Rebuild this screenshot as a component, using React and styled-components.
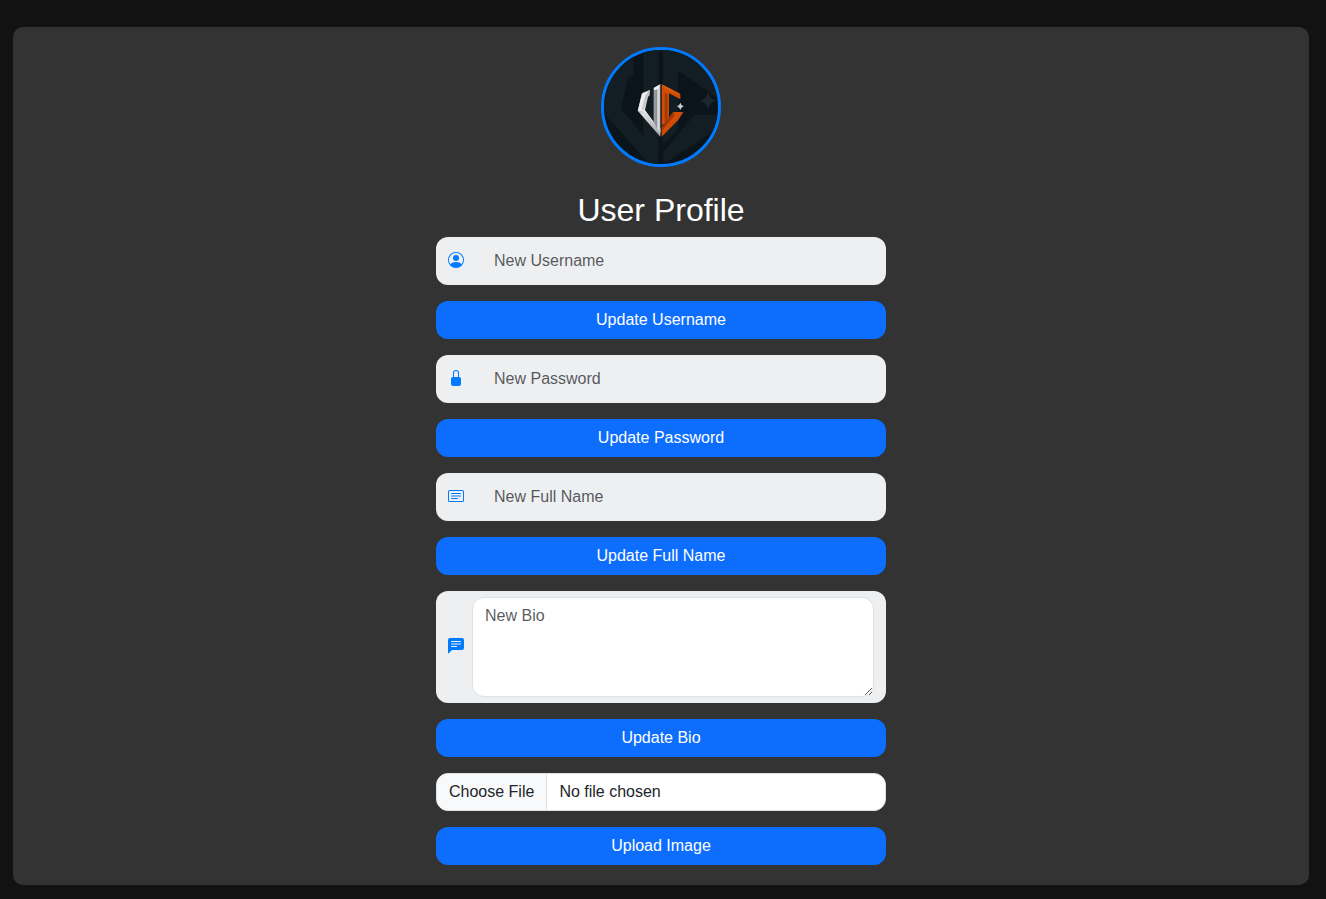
import React from 'react';
import styled, { createGlobalStyle } from 'styled-components';
import { BsPersonCircle, BsLockFill, BsCardText, BsChatLeftTextFill } from 'react-icons/bs';

const GlobalStyle = createGlobalStyle`
  *, *::before, *::after { box-sizing: border-box; }
  body {
    margin: 0;
    background: #121212;
    color: #fff;
    font: 400 16px/1.5 "Liberation Sans", Arial, sans-serif;
  }
`;

const Page = styled.main`
  min-height: 899px;
  padding: 27px 17px 14px 13px;
`;

const Card = styled.section`
  height: 858px;
  padding: 20px;
  border-radius: 10px;
  background: #333;
  display: flex;
  flex-direction: column;
  align-items: center;
`;

const Avatar = styled.div`
  width: 120px;
  height: 120px;
  flex: none;
  border: 3px solid #007bff;
  border-radius: 50%;
  overflow: hidden;
  background: #0b141a;

  svg { display: block; width: 100%; height: 100%; }
`;

const Title = styled.h2`
  margin: 24px 0 8px;
  font-size: 32px;
  line-height: 38px;
  font-weight: 400;
`;

const Form = styled.form`
  width: 450px;
  display: flex;
  flex-direction: column;
  gap: 16px;
`;

const Field = styled.label`
  display: flex;
  align-items: center;
  height: ${({ $tall }) => ($tall ? '112px' : '48px')};
  padding: 0 12px;
  border-radius: 12px;
  background: #eeeff1;

  svg {
    flex: none;
    width: 16px;
    height: 16px;
    color: #007bff;
    margin-bottom: 2px;
  }
`;

const Input = styled.input`
  flex: 1;
  min-width: 0;
  height: 38px;
  margin: 0 0 1px 17px;
  padding: 6px 12px;
  border: 1px solid transparent;
  background: transparent;
  color: #212529;
  font: inherit;
  outline: none;

  &::placeholder { color: rgba(33, 37, 41, 0.75); }
`;

const TextArea = styled.textarea`
  flex: 1;
  height: 100px;
  margin: 0 0 0 8px;
  padding: 6px 12px;
  border: 1px solid #dee2e6;
  border-radius: 12px;
  background: #fff;
  color: #212529;
  font: inherit;
  resize: vertical;
  outline: none;

  &::placeholder { color: rgba(33, 37, 41, 0.75); }
`;

const Button = styled.button`
  height: 38px;
  padding: 0 12px 1px;
  border: 0;
  border-radius: 12px;
  background: #0d6efd;
  color: #fff;
  font: inherit;
  cursor: pointer;
`;

const FileInput = styled.input`
  width: 100%;
  height: 38px;
  padding: 6px 12px;
  border: 1px solid #dee2e6;
  border-radius: 12px;
  overflow: hidden;
  background: #fff;
  color: #212529;
  font: inherit;

  &::file-selector-button {
    margin: -6px 12px -6px -12px;
    padding: 6px 12px;
    border: 0 solid #dee2e6;
    border-right-width: 1px;
    border-radius: 0;
    background: #f8f9fa;
    color: #212529;
    font: inherit;
  }
`;

function Emblem() {
  return (
    <svg viewBox="24 24 342 342" aria-hidden="true">
      <defs>
        <linearGradient id="steel" x1="0" y1="0" x2="0.8" y2="1">
          <stop offset="0" stopColor="#8f9297" />
          <stop offset="0.45" stopColor="#dddee1" />
          <stop offset="1" stopColor="#a9acb1" />
        </linearGradient>
        <linearGradient id="shaft" x1="0" y1="0" x2="1" y2="0">
          <stop offset="0" stopColor="#9b9fa5" />
          <stop offset="0.45" stopColor="#8d9299" />
          <stop offset="0.65" stopColor="#e2e3e5" />
          <stop offset="1" stopColor="#b9bcc0" />
        </linearGradient>
      </defs>
      <g fill="#121e23">
        <path d="M24 24H112V98L96 110L75 200L142 282V24H188V366H160L24 214Z" />
        <path d="M201 24H280L366 80V170L308 128L247 86V262L201 308Z" />
        <path d="M295 218H366V260L202 366V330Z" />
      </g>
      <path fill="#1a282e" d="M336 148Q340 172 360 176Q340 180 336 204Q332 180 312 176Q332 172 336 148Z" />
      <path fill="url(#steel)" d="M162 143L138 153L125 206L193 284V258L173 240L147 204L156 165L161 159Z" />
      <path fill="#eeeef0" d="M138 155L126 206L136 203L149 159L160 148L148 151Z" />
      <path fill="#e8e9eb" d="M125 206L137 201L147 206L173 240L193 263V271L150 214L139 208Z" />
      <path fill="url(#shaft)" d="M173 138L193 127V275L173 242Z" />
      <path fill="#f0f0f2" d="M173 138L193 127L186 141L176 145Z" />
      <path fill="#d14d05" d="M197 127L253 156V172L219 154V232L197 251Z" />
      <path fill="#a63a05" d="M206 151L215 157V233L206 242Z" />
      <path fill="#e05d0d" d="M197 127L253 156L246 157L209 141Z" />
      <path fill="#d14d05" d="M232 210H262L246 235L197 284V256Z" />
      <path fill="#9e3704" d="M197 256L232 210L236 220L197 267Z" />
      <path fill="#c6cdd5" d="M253 182Q255 190 263 193Q255 196 253 204Q251 196 243 193Q251 190 253 182Z" />
    </svg>
  );
}

const fields = [
  { icon: BsPersonCircle, label: 'Username', type: 'text' },
  { icon: BsLockFill, label: 'Password', type: 'password' },
  { icon: BsCardText, label: 'Full Name', type: 'text' },
];

export default function App() {
  return (
    <>
      <GlobalStyle />
      <Page>
        <Card>
          <Avatar><Emblem /></Avatar>
          <Title>User Profile</Title>
          <Form>
            {fields.map(({ icon: Icon, label, type }) => (
              <React.Fragment key={label}>
                <Field>
                  <Icon />
                  <Input type={type} placeholder={`New ${label}`} />
                </Field>
                <Button type="button">Update {label}</Button>
              </React.Fragment>
            ))}
            <Field $tall>
              <BsChatLeftTextFill />
              <TextArea placeholder="New Bio" />
            </Field>
            <Button type="button">Update Bio</Button>
            <FileInput type="file" />
            <Button type="button">Upload Image</Button>
          </Form>
        </Card>
      </Page>
    </>
  );
}
